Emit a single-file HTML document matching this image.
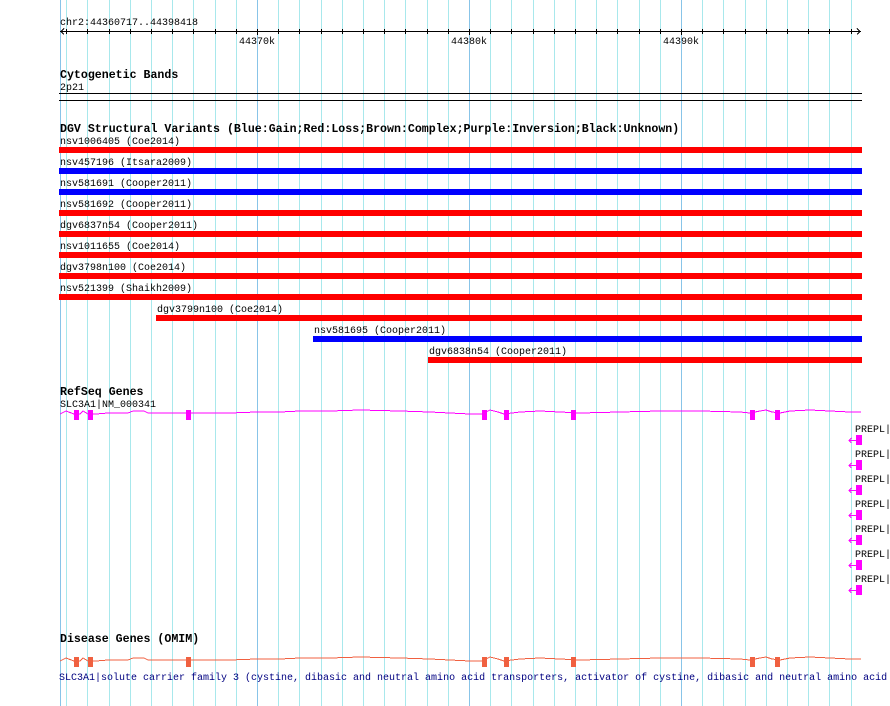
<!DOCTYPE html>
<html><head><meta charset="utf-8"><style>
html,body{margin:0;padding:0;background:#fff;width:890px;height:706px;overflow:hidden}
svg{display:block}
text{font-family:"Liberation Mono",monospace;font-size:10px;fill:#000}
.b{font-weight:bold;font-size:11.6px}
</style></head><body>
<svg width="890" height="706" viewBox="0 0 890 706" xmlns="http://www.w3.org/2000/svg" shape-rendering="crispEdges">
<g stroke="#a8e8ec" stroke-width="1">
<line x1="66.5" y1="0" x2="66.5" y2="706"/><line x1="87.5" y1="0" x2="87.5" y2="706"/><line x1="109.5" y1="0" x2="109.5" y2="706"/><line x1="130.5" y1="0" x2="130.5" y2="706"/><line x1="151.5" y1="0" x2="151.5" y2="706"/><line x1="172.5" y1="0" x2="172.5" y2="706"/><line x1="193.5" y1="0" x2="193.5" y2="706"/><line x1="215.5" y1="0" x2="215.5" y2="706"/><line x1="236.5" y1="0" x2="236.5" y2="706"/><line x1="278.5" y1="0" x2="278.5" y2="706"/><line x1="299.5" y1="0" x2="299.5" y2="706"/><line x1="321.5" y1="0" x2="321.5" y2="706"/><line x1="342.5" y1="0" x2="342.5" y2="706"/><line x1="363.5" y1="0" x2="363.5" y2="706"/><line x1="384.5" y1="0" x2="384.5" y2="706"/><line x1="405.5" y1="0" x2="405.5" y2="706"/><line x1="427.5" y1="0" x2="427.5" y2="706"/><line x1="448.5" y1="0" x2="448.5" y2="706"/><line x1="490.5" y1="0" x2="490.5" y2="706"/><line x1="511.5" y1="0" x2="511.5" y2="706"/><line x1="533.5" y1="0" x2="533.5" y2="706"/><line x1="554.5" y1="0" x2="554.5" y2="706"/><line x1="575.5" y1="0" x2="575.5" y2="706"/><line x1="596.5" y1="0" x2="596.5" y2="706"/><line x1="617.5" y1="0" x2="617.5" y2="706"/><line x1="639.5" y1="0" x2="639.5" y2="706"/><line x1="660.5" y1="0" x2="660.5" y2="706"/><line x1="702.5" y1="0" x2="702.5" y2="706"/><line x1="723.5" y1="0" x2="723.5" y2="706"/><line x1="745.5" y1="0" x2="745.5" y2="706"/><line x1="766.5" y1="0" x2="766.5" y2="706"/><line x1="787.5" y1="0" x2="787.5" y2="706"/><line x1="808.5" y1="0" x2="808.5" y2="706"/><line x1="829.5" y1="0" x2="829.5" y2="706"/><line x1="851.5" y1="0" x2="851.5" y2="706"/>
</g>
<g stroke="#88c4e8" stroke-width="1">
<line x1="60.5" y1="0" x2="60.5" y2="706"/><line x1="257.5" y1="0" x2="257.5" y2="706"/><line x1="469.5" y1="0" x2="469.5" y2="706"/><line x1="681.5" y1="0" x2="681.5" y2="706"/>
</g>
<text x="60" y="25">chr2:44360717..44398418</text>
<g stroke="#000" stroke-width="1">
<line x1="60" y1="31.5" x2="861" y2="31.5"/>
<polyline fill="none" points="64,28.5 61,31.5 64,34.5"/>
<polyline fill="none" points="857,28.5 860,31.5 857,34.5"/>
<path d="M66.5 29v5M87.5 29v5M109.5 29v5M130.5 29v5M151.5 29v5M172.5 29v5M193.5 29v5M215.5 29v5M236.5 29v5M257.5 29v6M278.5 29v5M299.5 29v5M321.5 29v5M342.5 29v5M363.5 29v5M384.5 29v5M405.5 29v5M427.5 29v5M448.5 29v5M469.5 29v6M490.5 29v5M511.5 29v5M533.5 29v5M554.5 29v5M575.5 29v5M596.5 29v5M617.5 29v5M639.5 29v5M660.5 29v5M681.5 29v6M702.5 29v5M723.5 29v5M745.5 29v5M766.5 29v5M787.5 29v5M808.5 29v5M829.5 29v5M851.5 29v5"/>
</g>
<text x="239" y="44">44370k</text>
<text x="451" y="44">44380k</text>
<text x="663" y="44">44390k</text>

<text class="b" x="60" y="78">Cytogenetic Bands</text>
<text x="60" y="90">2p21</text>
<rect x="59" y="93" width="803" height="1" fill="#000"/>
<rect x="59" y="100" width="803" height="1" fill="#000"/>

<text class="b" x="60" y="132">DGV Structural Variants (Blue:Gain;Red:Loss;Brown:Complex;Purple:Inversion;Black:Unknown)</text>
<text x="60" y="144">nsv1006405 (Coe2014)</text>
<rect x="59" y="147" width="803" height="6" fill="#ff0000"/>
<text x="60" y="165">nsv457196 (Itsara2009)</text>
<rect x="59" y="168" width="803" height="6" fill="#0000ff"/>
<text x="60" y="186">nsv581691 (Cooper2011)</text>
<rect x="59" y="189" width="803" height="6" fill="#0000ff"/>
<text x="60" y="207">nsv581692 (Cooper2011)</text>
<rect x="59" y="210" width="803" height="6" fill="#ff0000"/>
<text x="60" y="228">dgv6837n54 (Cooper2011)</text>
<rect x="59" y="231" width="803" height="6" fill="#ff0000"/>
<text x="60" y="249">nsv1011655 (Coe2014)</text>
<rect x="59" y="252" width="803" height="6" fill="#ff0000"/>
<text x="60" y="270">dgv3798n100 (Coe2014)</text>
<rect x="59" y="273" width="803" height="6" fill="#ff0000"/>
<text x="60" y="291">nsv521399 (Shaikh2009)</text>
<rect x="59" y="294" width="803" height="6" fill="#ff0000"/>
<text x="157" y="312">dgv3799n100 (Coe2014)</text>
<rect x="156" y="315" width="706" height="6" fill="#ff0000"/>
<text x="314" y="333">nsv581695 (Cooper2011)</text>
<rect x="313" y="336" width="549" height="6" fill="#0000ff"/>
<text x="429" y="354">dgv6838n54 (Cooper2011)</text>
<rect x="428" y="357" width="434" height="6" fill="#ff0000"/>

<text class="b" x="60" y="395">RefSeq Genes</text>
<text x="60" y="407">SLC3A1|NM_000341</text>
<polyline fill="none" stroke="#ff00ff" stroke-width="1" points="60,414 66,411 74,414 80,414 83,411 88,414 96,414 108,413 128,413 133,411 144,411 148,413 168,413 200,413 230,413 257,412 280,412 300,411 330,411 360,410 400,411 430,412 470,414 482,414 490,410 498,412 504,414 520,412 540,411 560,412 580,413 620,412 660,411 700,411 740,412 750,413 760,411 766,410 772,412 780,413 790,411 810,410 830,411 850,412 861,412"/>
<g fill="#ff00ff">
<rect x="74" y="410" width="5" height="10"/><rect x="88" y="410" width="5" height="10"/><rect x="186" y="410" width="5" height="10"/><rect x="482" y="410" width="5" height="10"/><rect x="504" y="410" width="5" height="10"/><rect x="571" y="410" width="5" height="10"/><rect x="750" y="410" width="5" height="10"/><rect x="775" y="410" width="5" height="10"/>
</g>
<g fill="#ff00ff" stroke="#ff00ff">
<text x="855" y="432" style="fill:#000;stroke:none">PREPL|</text>
<rect x="856" y="435" width="6" height="10" stroke="none"/><path d="M849 440.5h7M851.5 438l-2.5 2.5 2.5 2.5" fill="none"/>
<text x="855" y="457" style="fill:#000;stroke:none">PREPL|</text>
<rect x="856" y="460" width="6" height="10" stroke="none"/><path d="M849 465.5h7M851.5 463l-2.5 2.5 2.5 2.5" fill="none"/>
<text x="855" y="482" style="fill:#000;stroke:none">PREPL|</text>
<rect x="856" y="485" width="6" height="10" stroke="none"/><path d="M849 490.5h7M851.5 488l-2.5 2.5 2.5 2.5" fill="none"/>
<text x="855" y="507" style="fill:#000;stroke:none">PREPL|</text>
<rect x="856" y="510" width="6" height="10" stroke="none"/><path d="M849 515.5h7M851.5 513l-2.5 2.5 2.5 2.5" fill="none"/>
<text x="855" y="532" style="fill:#000;stroke:none">PREPL|</text>
<rect x="856" y="535" width="6" height="10" stroke="none"/><path d="M849 540.5h7M851.5 538l-2.5 2.5 2.5 2.5" fill="none"/>
<text x="855" y="557" style="fill:#000;stroke:none">PREPL|</text>
<rect x="856" y="560" width="6" height="10" stroke="none"/><path d="M849 565.5h7M851.5 563l-2.5 2.5 2.5 2.5" fill="none"/>
<text x="855" y="582" style="fill:#000;stroke:none">PREPL|</text>
<rect x="856" y="585" width="6" height="10" stroke="none"/><path d="M849 590.5h7M851.5 588l-2.5 2.5 2.5 2.5" fill="none"/>
</g>

<text class="b" x="60" y="642">Disease Genes (OMIM)</text>
<polyline fill="none" stroke="#f06040" stroke-width="1" points="60,661 66,658 74,661 80,661 83,658 88,661 96,661 108,660 128,660 133,658 144,658 148,660 168,660 200,660 230,660 257,659 280,659 300,658 330,658 360,657 400,658 430,659 470,661 482,661 490,657 498,659 504,661 520,659 540,658 560,659 580,660 620,659 660,658 700,658 740,659 750,660 760,658 766,657 772,659 780,660 790,658 810,657 830,658 850,659 861,659"/>
<g fill="#f06040">
<rect x="74" y="657" width="5" height="10"/><rect x="88" y="657" width="5" height="10"/><rect x="186" y="657" width="5" height="10"/><rect x="482" y="657" width="5" height="10"/><rect x="504" y="657" width="5" height="10"/><rect x="571" y="657" width="5" height="10"/><rect x="750" y="657" width="5" height="10"/><rect x="775" y="657" width="5" height="10"/>
</g>
<text x="59" y="680" style="fill:#000080">SLC3A1|solute carrier family 3 (cystine, dibasic and neutral amino acid transporters, activator of cystine, dibasic and neutral amino acid</text>
</svg>
</body></html>
